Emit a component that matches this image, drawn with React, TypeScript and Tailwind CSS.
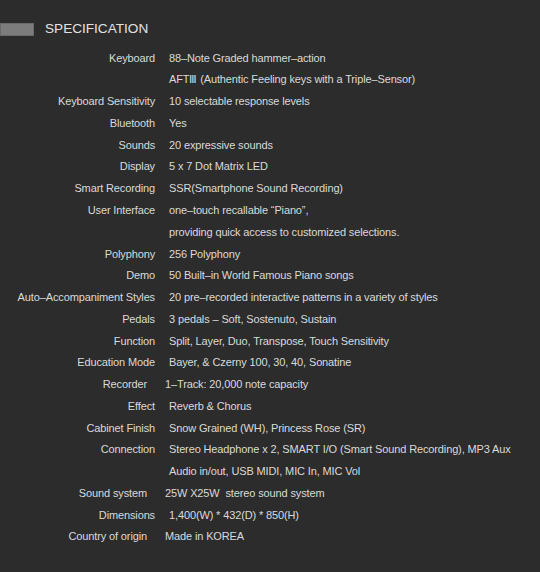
import React from "react";

const rows: [string, string, string?][] = [
  ["Keyboard", "88–Note Graded hammer–action"],
  ["", "AFTⅢ (Authentic Feeling keys with a Triple–Sensor)"],
  ["Keyboard Sensitivity", "10 selectable response levels"],
  ["Bluetooth", "Yes"],
  ["Sounds", "20 expressive sounds"],
  ["Display", "5 x 7 Dot Matrix LED"],
  ["Smart Recording", "SSR(Smartphone Sound Recording)"],
  ["User Interface", "one–touch recallable “Piano”,"],
  ["", "providing quick access to customized selections."],
  ["Polyphony", "256 Polyphony"],
  ["Demo", "50 Built–in World Famous Piano songs"],
  ["Auto–Accompaniment Styles", "20 pre–recorded interactive patterns in a variety of styles"],
  ["Pedals", "3 pedals – Soft, Sostenuto, Sustain"],
  ["Function", "Split, Layer, Duo, Transpose, Touch Sensitivity"],
  ["Education Mode", "Bayer, & Czerny 100, 30, 40, Sonatine"],
  ["Recorder", "1–Track: 20,000 note capacity", "r"],
  ["Effect", "Reverb & Chorus"],
  ["Cabinet Finish", "Snow Grained (WH), Princess Rose (SR)"],
  ["Connection", "Stereo Headphone x 2, SMART I/O (Smart Sound Recording), MP3 Aux"],
  ["", "Audio in/out, USB MIDI, MIC In, MIC Vol"],
  ["Sound system", "25W X25W  stereo sound system", "r"],
  ["Dimensions", "1,400(W) * 432(D) * 850(H)"],
  ["Country of origin", "Made in KOREA", "r"],
];

export default function App() {
  return (
    <div
      className="w-[540px] h-[572px] bg-[#2c2c2c] text-[#dadada] overflow-hidden"
      style={{ fontFamily: '"Liberation Sans", Arial, sans-serif' }}
    >
      <div className="flex items-center pt-[22px] h-[36px]">
        <div className="w-[34px] h-[13px] bg-[#7c7c7c] border border-[#6a6a6a]" />
        <div className="ml-[11px] text-[13.6px] leading-[14px] text-[#e2e2e2]">
          SPECIFICATION
        </div>
      </div>
      <div className="mt-[11px] flex flex-col text-[11px] tracking-[-0.13px]">
        {rows.map(([label, value, shift], i) => (
          <div key={i} className="flex h-[21.78px] items-center whitespace-pre">
            <div
              className={
                "w-[155px] text-right shrink-0 " + (shift ? "pr-[8px]" : "pr-0")
              }
            >
              {label}
            </div>
            <div className={shift ? "pl-[10px]" : "pl-[14px]"}>{value}</div>
          </div>
        ))}
      </div>
    </div>
  );
}
